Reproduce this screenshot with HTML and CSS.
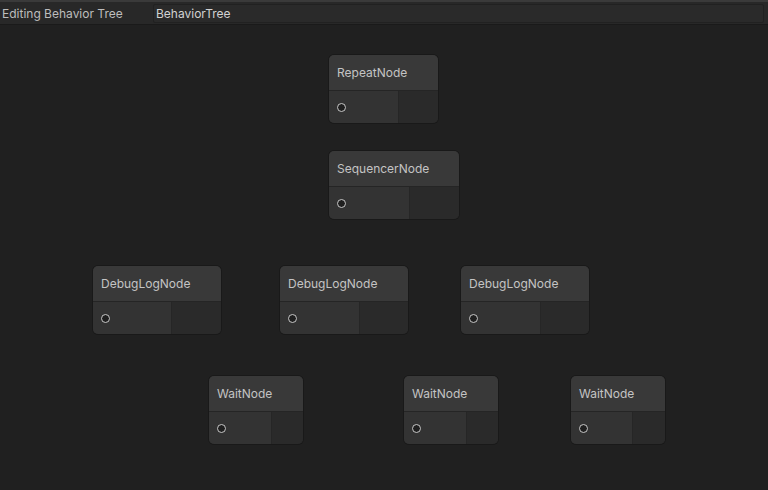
FILE: index.html
```html
<!DOCTYPE html>
<html>
<head>
<meta charset="utf-8">
<link rel="stylesheet" href="styles.css">
</head>
<body>
<div class="toolbar">
  <span class="label">Editing Behavior Tree</span>
  <div class="field">BehaviorTree</div>
</div>
<div class="canvas">
  <div class="node" style="left:329px;top:30px;width:109px;--in:70px">
    <div class="title">RepeatNode</div>
    <div class="ports"><div class="in"><span class="port"></span></div><div class="out"></div></div>
  </div>
  <div class="node" style="left:329px;top:126px;width:130px;--in:81px">
    <div class="title">SequencerNode</div>
    <div class="ports"><div class="in"><span class="port"></span></div><div class="out"></div></div>
  </div>
  <div class="node" style="left:93px;top:241px;width:128px;--in:79px">
    <div class="title">DebugLogNode</div>
    <div class="ports"><div class="in"><span class="port"></span></div><div class="out"></div></div>
  </div>
  <div class="node" style="left:280px;top:241px;width:128px;--in:80px">
    <div class="title">DebugLogNode</div>
    <div class="ports"><div class="in"><span class="port"></span></div><div class="out"></div></div>
  </div>
  <div class="node" style="left:461px;top:241px;width:128px;--in:80px">
    <div class="title">DebugLogNode</div>
    <div class="ports"><div class="in"><span class="port"></span></div><div class="out"></div></div>
  </div>
  <div class="node" style="left:209px;top:351px;width:94px;--in:63px">
    <div class="title">WaitNode</div>
    <div class="ports"><div class="in"><span class="port"></span></div><div class="out"></div></div>
  </div>
  <div class="node" style="left:404px;top:351px;width:94px;--in:63px">
    <div class="title">WaitNode</div>
    <div class="ports"><div class="in"><span class="port"></span></div><div class="out"></div></div>
  </div>
  <div class="node" style="left:571px;top:351px;width:94px;--in:62px">
    <div class="title">WaitNode</div>
    <div class="ports"><div class="in"><span class="port"></span></div><div class="out"></div></div>
  </div>
</div>
</body>
</html>
```
FILE: styles.css
```css
* { box-sizing: border-box; }
html, body {
  margin: 0;
  padding: 0;
  width: 768px;
  height: 490px;
  overflow: hidden;
  background: #202020;
  font-family: Inter, "Noto Sans", sans-serif;
  font-size: 12px;
  color: #c4c4c4;
}
.toolbar {
  height: 25px;
  background: #282828;
  border-top: 2px solid #3a3a3a;
  border-bottom: 1px solid #1a1a1a;
  display: flex;
  align-items: center;
  padding: 0 4px 0 2px;
}
.label {
  width: 151px;
  flex: none;
  color: #bdbdbd;
}
.field {
  flex: 1;
  height: 19px;
  background: #2a2a2a;
  border: 1px solid #212121;
  border-radius: 2px;
  padding: 0 3px 0 2px;
  line-height: 17px;
  color: #d2d2d2;
}
.canvas {
  position: relative;
  height: 465px;
  background: #202020;
}
.node {
  position: absolute;
  border-radius: 5px;
  overflow: hidden;
  background: #2a2a2a;
  box-shadow: 0 0 0 1px #191919;
}
.title {
  height: 36px;
  background: #393939;
  border-bottom: 1px solid #252525;
  padding: 0 8px;
  line-height: 36px;
  color: #c4c4c4;
  white-space: nowrap;
}
.ports {
  display: flex;
  height: 32px;
}
.in {
  width: var(--in);
  flex: none;
  background: #333333;
  display: flex;
  align-items: center;
  padding-left: 8px;
  border-right: 1px solid #262626;
}
.out {
  flex: 1;
  background: #2a2a2a;
}
.port {
  width: 9px;
  height: 9px;
  border-radius: 50%;
  border: 1.5px solid #c8c8c8;
  background: #1f1f1f;
}
```
